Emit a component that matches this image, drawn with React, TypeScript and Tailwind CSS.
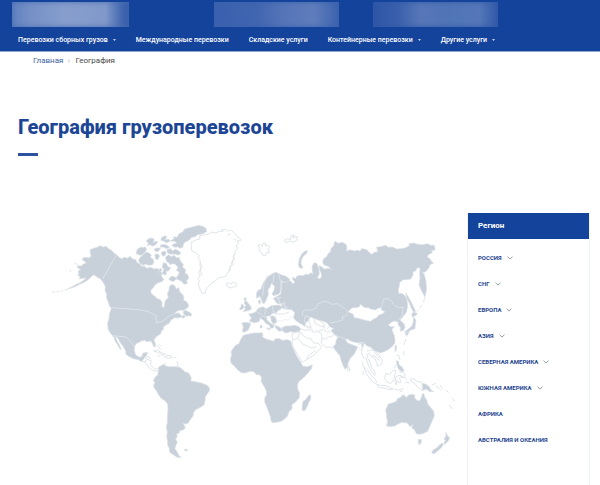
const navItems = [
  { label: 'Перевозки сборных грузов', menu: true },
  { label: 'Международные перевозки', menu: false },
  { label: 'Складские услуги', menu: false },
  { label: 'Контейнерные перевозки', menu: true },
  { label: 'Другие услуги', menu: true },
];

const regions = [
  { label: 'Россия', open: true },
  { label: 'СНГ', open: true },
  { label: 'Европа', open: true },
  { label: 'Азия', open: true },
  { label: 'Северная Америка', open: true },
  { label: 'Южная Америка', open: true },
  { label: 'Африка', open: false },
  { label: 'Австралия и Океания', open: false },
];

// Served regions, filled
const land = [
  // North America
  'M150 104L163 99 172 97 180 92 190 96 198 94 207 102 215 106 222 114 232 121 238 128 246 131 254 126 262 130 270 124 277 131 288 134 290 142 300 147 304 154 314 154 320 160 330 157 345 162 354 160 358 170 366 176 365 186 372 193 366 200 355 203 345 210 340 218 332 226 334 236 344 243 350 250 361 254 366 262 366 275 371 278 374 270 375 258 385 247 382 236 387 226 388 214 396 208 405 213 409 222 416 218 420 232 428 238 432 248 430 255 440 260 447 272 441 280 430 286 418 286 408 290 405 298 414 293 421 298 426 304 416 309 404 308 392 316 388 325 378 330 370 336 371 342 364 349 362 357 350 364 342 374 346 386 346 395 341 396 337 385 333 378 320 380 314 376 303 378 298 382 288 386 284 394 283 406 287 420 300 427 306 424 309 414 323 412 320 421 314 427 311 432 304 440 296 434 280 431 266 424 258 418 257 408 249 394 240 382 234 370 226 364 231 378 238 389 244 404 239 401 233 389 226 380 222 368 218 362 208 350 204 340 203 325 207 310 208 297 214 280 208 272 205 262 199 248 200 238 195 226 196 214 189 202 182 192 174 188 166 182 160 180 151 188 143 196 130 203 119 208 108 214 95 219 84 221 96 215 109 208 120 203 132 195 139 189 128 190 118 192 120 184 113 181 117 175 114 168 122 164 113 158 112 152 124 153 130 147 138 145 134 139 128 136 128 129 137 127 145 129 154 124 151 116Z',
  // Arctic archipelago
  'M288 116L291 105 297 99 304 96 309 98 316 95 320 104 315 111 307 119 298 121 294 118Z',
  'M298 130L308 120 317 112 326 113 334 120 331 127 339 132 342 142 336 150 327 151 317 148 308 151 300 145 296 139Z',
  'M318 78L328 70 338 69 343 75 339 82 348 79 354 81 346 90 337 94 330 89 322 92 325 84Z',
  'M342 103L351 98 362 100 355 109 347 110ZM344 119L353 116 359 123 354 133 347 133ZM364 68L375 62 381 65 375 74 386 72 390 79 380 83 370 78 363 76ZM361 90L374 88 385 93 388 99 378 101 371 96 362 97Z',
  'M364 112L373 108 379 113 374 123 366 122ZM353 172L360 160 367 164 362 170 369 178 360 178Z',
  'M380 105L391 101 399 108 405 102 417 108 423 116 414 120 404 117 393 118 383 114Z',
  'M376 127L385 119 394 125 402 121 410 128 417 127 422 139 430 148 428 157 437 164 435 174 444 180 446 192 440 195 442 206 432 208 425 199 414 194 407 190 415 180 418 172 409 166 414 157 406 148 397 146 390 149 386 143 380 140Z',
  'M370 143L379 145 384 155 392 158 387 167 378 169 380 178 373 180 367 173 372 163 366 157ZM386 192L395 183 405 186 410 192 401 199 393 198Z',
  'M390 78L402 71 400 65 411 67 417 56 428 51 434 42 448 38 460 35 475 31 488 34 498 40 500 50 489 56 473 59 465 65 455 67 447 76 437 80 430 87 429 97 420 100 414 96 404 97 395 91 402 86 410 85 405 79Z',
  'M429 290L437 285 442 289 449 292 455 297 453 304 446 302 440 304 432 299ZM429 301L437 305 429 310 423 307Z',
  // South America
  'M366 450L372 448 377 453 389 455 403 455 414 455 424 460 434 470 446 474 454 488 452 498 467 500 484 504 500 510 508 518 509 526 501 538 496 546 495 558 492 570 479 578 467 584 461 592 459 603 451 614 444 625 435 627 429 624 433 632 436 638 431 644 419 647 417 655 409 657 412 664 407 672 412 682 408 690 405 701 411 710 417 722 424 727 412 727 400 719 389 712 388 700 383 690 382 675 380 665 382 652 379 637 382 622 382 604 384 585 383 567 375 557 363 550 355 538 348 525 342 518 341 509 345 503 340 497 345 487 353 480 355 467 356 457Z',
  'M432 705L438 702 444 705 437 708Z',
  // Africa
  'M610 361L622 358 640 354 658 354 665 352 669 359 667 366 680 373 690 375 700 379 706 371 718 371 728 376 742 374 751 377 755 385 756 393 762 405 767 417 772 426 780 438 785 446 789 454 802 455 817 449 815 460 804 474 790 489 776 500 772 512 774 525 779 533 778 548 767 561 755 570 757 580 747 590 743 602 734 612 724 619 710 622 697 623 693 617 691 604 686 592 681 577 674 561 674 549 680 539 679 527 672 514 666 504 663 499 665 488 659 479 650 480 641 470 630 469 616 474 604 473 592 464 584 454 573 444 571 431 575 421 573 410 580 399 587 391 598 385 601 375Z',
  'M806 541L811 539 813 549 805 566 798 582 792 588 786 584 787 573 789 559 798 553Z',
  // Iberia and France
  'M605 324L618 322 633 325 630 333 625 345 614 352 607 349 610 336Z',
  'M626 298L636 295 647 291 655 279 669 275 678 282 694 272 703 271 717 270 727 276 722 287 711 296 698 294 689 303 678 304 669 307 660 311 657 320 643 323 628 319 634 308Z',
  // Italy, Corsica and Sardinia
  'M659 309L670 304 680 307 681 315 692 325 702 331 700 339 692 340 688 331 677 325 671 316ZM661 330L666 331 666 339 660 339ZM679 339L690 340 688 346Z',
  'M691 304L699 302 708 310 710 322 700 327 694 319ZM704 334L714 333 724 341 726 347 718 349 710 343Z',
  // Great Britain and Ireland
  'M611 250L619 248 618 257 624 264 633 275 634 283 624 287 609 290 616 282 612 276 618 272 612 264 615 257ZM604 267L610 269 611 279 602 285 598 281 603 275Z',
  // Turkey
  'M725 338L738 333 751 333 764 331 777 335 782 341 779 349 763 352 751 350 738 354 727 348Z',
  // Scandinavia
  'M650 250L649 236 653 227 663 222 668 207 676 194 687 183 699 175 708 172 720 178 738 184 750 193 745 202 733 202 725 197 723 210 722 229 716 238 700 242 696 237 702 226 704 214 694 205 691 215 684 225 685 239 681 249 675 263 669 266 665 256 660 244Z',
  'M655 257L661 254 662 263 657 268Z',
  // Russia, Kazakhstan, China and India
  'M700 250L711 244 722 238 724 225 725 202 738 201 747 195 755 201 758 207 765 201 758 194 758 186 767 191 771 183 780 181 789 182 798 177 806 179 812 173 819 177 817 166 816 154 822 143 830 145 834 153 837 163 838 177 832 188 839 191 845 186 843 173 838 162 837 152 846 155 852 162 867 160 874 163 865 154 853 151 848 143 850 132 860 125 864 116 872 109 873 100 881 93 883 82 887 78 893 85 907 82 918 88 921 98 920 109 929 104 944 108 953 105 960 109 964 101 974 102 981 104 986 111 995 118 1005 111 1012 111 1012 103 1009 97 1022 95 1037 91 1045 97 1057 96 1070 102 1082 101 1094 99 1103 95 1109 91 1106 86 1120 84 1133 88 1148 89 1162 86 1173 91 1181 90 1185 98 1184 107 1175 105 1177 113 1165 119 1162 126 1171 132 1174 139 1181 144 1170 149 1167 159 1155 172 1148 171 1153 179 1158 200 1160 222 1155 246 1146 230 1137 210 1140 190 1139 176 1140 160 1132 158 1127 168 1119 171 1119 181 1112 192 1099 194 1089 194 1079 203 1078 214 1075 224 1076 235 1087 236 1096 243 1101 255 1103 274 1099 292 1088 306 1080 315 1092 326 1095 336 1091 346 1081 349 1081 337 1074 329 1074 321 1063 318 1054 322 1045 329 1052 335 1063 335 1056 343 1058 350 1063 362 1065 375 1064 386 1055 396 1046 403 1031 411 1018 413 1003 407 992 397 981 393 973 385 969 397 960 398 954 392 950 403 943 417 931 430 925 442 923 457 915 463 908 449 903 435 899 421 890 411 883 401 880 393 887 388 888 377 894 366 886 361 876 350 873 345 881 341 869 335 861 323 850 319 836 316 821 310 811 306 806 316 797 324 794 334 785 328 776 323 766 316 760 307 762 293 748 287 738 283 726 279 724 267 712 266Z',
  // Novaya Zemlya
  'M775 149L778 131 785 117 795 108 803 107 799 116 791 122 785 132 783 145 789 160 778 158Z',
  // Sakhalin and Japan
  'M1097 234L1105 246 1114 262 1122 278 1127 289 1121 292 1114 280 1109 266 1101 252Z',
  'M1115 298L1120 291 1132 295 1129 301 1117 306ZM1120 306L1128 315 1126 328 1125 341 1112 345 1105 352 1093 351 1104 343 1115 334 1120 321ZM1096 352L1106 350 1105 356 1099 364ZM1065 393L1070 391 1069 405 1065 410Z',
  // Philippines and New Guinea
  'M1069 437L1076 439 1077 449 1086 456 1092 467 1087 472 1078 465 1072 455ZM1147 505L1158 508 1169 516 1171 523 1181 530 1170 530 1159 523 1148 526Z',
  // Australia, Tasmania, New Zealand
  'M1042 574L1044 568 1058 563 1069 559 1072 551 1082 547 1088 539 1096 543 1099 548 1104 541 1115 538 1124 540 1124 549 1132 557 1139 557 1144 548 1147 537 1151 535 1154 546 1160 554 1163 567 1173 578 1181 589 1183 602 1176 619 1170 633 1163 649 1151 655 1139 658 1129 656 1124 645 1115 638 1119 628 1110 635 1102 624 1086 622 1074 627 1064 633 1048 635 1039 632 1043 622 1040 609 1039 596 1037 585Z',
  'M1134 673L1145 674 1143 685 1136 689ZM1217 652L1224 664 1229 668 1225 678 1215 688 1211 685 1216 677 1212 671 1218 663ZM1207 684L1210 690 1202 700 1193 708 1182 717 1175 713 1179 705 1190 699 1199 689Z',
];

// Coastlines of the regions without service, outline only
const outlines = [
  // Greenland
  'M455 92L453 82 467 75 480 72 479 62 491 60 506 57 514 51 528 54 539 48 549 50 545 44 558 43 564 49 572 44 580 52 586 58 591 65 600 70 602 77 591 78 596 85 588 93 593 100 585 108 584 119 579 125 584 133 576 140 580 149 569 155 571 166 562 174 557 184 546 187 536 189 528 196 519 201 511 208 503 217 497 226 496 234 489 236 482 230 479 219 475 210 478 198 473 190 480 181 476 172 482 162 480 151 481 138 475 130 478 122 466 113 457 110 454 102Z',
  'M480 142L487 158 481 164 485 179 478 184M584 117L578 137 573 149M574 149L565 170M588 76L580 72M571 57L562 61',
  // Iceland
  'M558 206L566 203 572 207 581 201 589 205 591 211 581 216 570 219 562 214Z',
  // Svalbard and Franz Josef Land
  'M654 91L661 88 667 94 669 85 677 84 675 92 685 91 690 97 684 104 688 114 680 112 675 123 668 120 664 111 656 106 660 100Z',
  'M732 76L743 71 751 75 753 63 763 59 758 69 771 64 771 75 759 82 748 78 738 83Z',
  // Central America and the Caribbean
  'M304 440L315 440 323 433 333 437 331 448 338 457 348 463 356 459M315 440L323 454 334 463 345 469 356 466M323 433L316 430 322 424 333 432M341 408L352 405 362 412 376 418 367 420 356 413ZM374 425L384 421 397 424 394 429 380 429ZM352 423L361 424M403 427L409 428M411 438L414 451 412 459M350 392L357 395 361 405M358 388L363 393M372 448L378 445',
  // Baltics, Belarus, Ukraine and the Balkans
  'M706 247L717 251 718 264 730 270 742 278 738 284M700 328L709 331 714 337M711 297L733 297 747 291',
  // Middle East
  'M760 354L770 353 781 350 789 361 799 369 812 371 821 384 836 385 845 397 834 409 820 421 800 434 788 442 780 431 770 414 761 399 756 387 759 374 755 363Z',
  'M782 341L795 346 810 344 820 352 833 349 844 356 846 370 844 384 857 397 870 396 880 398M800 334L813 337 818 347M833 349L851 344 862 352 872 347M844 370L858 373 866 365 875 366 883 357M760 374L773 370 781 350M773 370L789 388 805 394 813 400 830 395M800 434L805 421 826 407M793 313L797 302 807 306 807 321 813 335 805 340 798 333Z',
  'M841 318L853 328 850 340M820 310L827 326 840 333 856 335M868 335L861 341',
  // Sri Lanka
  'M923 453L928 457 929 467 924 468Z',
  // South-East Asia
  'M971 387L966 400 964 415 971 428 978 431 984 446 989 459 998 475 1005 481 1004 469 994 456 991 443 984 431 980 419 987 414 993 425 1004 429 1010 443 1012 453 1024 448 1027 436 1018 421 1009 412M981 409L991 405 1001 407 1010 420 1019 430M993 425L1002 420 1012 432 1020 436',
  'M971 455L982 465 993 481 1006 493 1010 502 1004 506 990 492 978 474ZM1010 508L1025 512 1037 511 1050 519 1060 522 1048 524 1032 519 1017 518ZM1037 475L1049 479 1059 466 1068 467 1064 480 1062 493 1053 505 1041 502 1034 491ZM1068 485L1077 481 1089 485 1078 490 1083 501 1077 504 1071 496 1069 510 1065 501ZM1094 485L1099 493M1096 502L1108 503M1112 492L1122 491 1129 499 1146 502 1147 527 1132 515 1122 504 1113 499ZM1063 522L1075 525 1091 521M1078 531L1088 528M1069 423L1076 420 1080 435M1078 472L1089 470 1096 480 1089 489 1080 480M1061 460L1070 446M1092 421L1091 408M968 441L969 455M969 468L969 480M1175 510L1189 505M1187 513L1203 524M1200 510L1208 521M1218 525L1225 532M1237 549L1243 559M1227 570L1238 582',
  // Aleutian and Kuril chains
  'M36 231L45 231M50 230L59 230M63 229L70 226M74 225L84 222M88 166L94 169M104 144L112 149M1155 247L1150 262M1147 270L1139 280M1131 289L1135 286M1098 372L1092 389',
];

// Unserved countries enclosed by filled land
const cutouts = [
  // Mongolia
  'M925 290L931 283 939 278 950 278 959 275 960 268 968 273 973 278 985 278 993 283 1006 285 1015 280 1023 278 1025 286 1035 290 1026 297 1017 299 1011 307 997 314 992 319 978 316 966 313 953 309 943 308 940 298Z',
  // Ukraine and Romania
  'M711 290L724 281 740 283 756 285 763 292 762 304 750 309 744 316 735 312 729 318 713 318 706 306Z',
  // Nepal, Bhutan and Bangladesh
  'M916 372L924 373 936 380 955 384 966 382 964 391 969 402 962 404 954 395 940 390 922 383Z',
];

// Borders drawn over the filled land
const borders = [
  'M228 121L188 192M214 278L260 281 305 285 327 291 348 302 349 324 369 318 386 304 404 296',
  'M218 362L258 366 270 378 284 395',
  'M702 177L699 205M716 177L722 200 725 225M684 180L672 205 668 244',
  'M677 277L674 300M697 272L699 289 710 293M650 290L668 301M655 279L664 288',
  'M724 267L733 262 736 282M710 250L724 247',
  'M788 302L788 291 795 284 812 286 830 279 832 268 850 259 864 261 876 268 893 266 909 277 925 291 917 303 908 305 907 316 890 320 870 324',
  'M1023 278L1027 268 1030 253 1042 250 1055 258 1063 271 1078 278 1089 276 1087 301 1074 316',
  'M886 361L900 366 918 373M955 388L974 382',
];

function WorldMap() {
  return (
    <svg viewBox="-66 0 1347 750" className="block w-full" role="img" aria-label="Карта мира">
      <g fill="#c8d0da" stroke="#dce2e9" strokeWidth="2" strokeLinejoin="round">
        {land.map((d) => (
          <path key={d} d={d} />
        ))}
      </g>
      <g className="fill-white stroke-[#e3e8ee] stroke-2" strokeLinejoin="round">
        {cutouts.map((d) => (
          <path key={d} d={d} />
        ))}
      </g>
      <g fill="none" stroke="#e0e5eb" strokeWidth="3" strokeLinejoin="round">
        {outlines.map((d) => (
          <path key={d} d={d} />
        ))}
      </g>
      <g fill="none" stroke="#dde3ea" strokeWidth="3">
        {borders.map((d) => (
          <path key={d} d={d} />
        ))}
      </g>
    </svg>
  );
}

function Chevron() {
  return (
    <svg viewBox="0 0 6 4" className="mt-0.5 h-1 w-1.5" fill="none" stroke="#79818c" strokeWidth="0.8">
      <path d="M0.5 0.7L3 3.1 5.5 0.7" />
    </svg>
  );
}

export default function App() {
  return (
    <div className="flex min-h-screen flex-col bg-white font-['Roboto','Liberation_Sans',sans-serif]">
      <header className="border-b border-[#8fa5cf] bg-[#14439c] pt-0.5">
        <div className="flex pl-3">
          <div className="h-[25px] w-[117px] bg-[linear-gradient(90deg,#5f80bf_0%,#7590c6_15%,#879ecd_45%,#8199ca_80%,#4a6db3_92%,#3159a8_100%)] shadow-[inset_0_0_5px_#4a6db3]" />
          <div className="ml-[85px] h-[25px] w-[125px] bg-[linear-gradient(90deg,#3a60ae_0%,#4166b0_35%,#5574b8_55%,#5f7dbb_80%,#3c62ae_100%)] shadow-[inset_0_0_5px_#3c62ae]" />
          <div className="ml-[34px] h-[25px] w-[125px] bg-[linear-gradient(90deg,#2c55a6_0%,#3a60ac_20%,#5776b8_38%,#5074b6_60%,#5577b9_85%,#3159a8_100%)] shadow-[inset_0_0_5px_#3159a8]" />
        </div>
        <nav className="flex h-6 items-center gap-5 pt-0.5 pl-[18px] text-[7px] font-medium text-white">
          {navItems.map((item) =>
            item.menu ? (
              <button key={item.label} type="button" className="flex items-center gap-[5px] whitespace-nowrap">
                {item.label}
                <svg viewBox="0 0 4 2" className="h-0.5 w-[3px]" fill="currentColor">
                  <path d="M0 0H4L2 2Z" />
                </svg>
              </button>
            ) : (
              <a key={item.label} href="#" className="whitespace-nowrap">
                {item.label}
              </a>
            ),
          )}
        </nav>
      </header>

      <nav className="flex items-center gap-1 pt-[3px] pl-[33px] text-[8px] leading-3" aria-label="Навигация">
        <a href="#" className="text-[#3f5f9f]">
          Главная
        </a>
        <svg viewBox="0 0 4 4" className="h-1 w-1" fill="none" stroke="#b9bec6" strokeWidth="0.8">
          <path d="M1 0.3L2.7 2 1 3.7" />
        </svg>
        <span className="text-[#4a4a4a]">География</span>
      </nav>

      <div className="mt-[46px] pl-[18px]">
        <h1 className="text-[20px] leading-7 font-extrabold text-[#1c4695]">География грузоперевозок</h1>
        <div className="mt-3 h-[3px] w-5 bg-[#2b539e]" />
      </div>

      <main className="mt-[57px] flex flex-1 pr-[10px] pl-[18px]">
        <div className="min-w-0 flex-1 pt-0.5">
          <WorldMap />
        </div>
        <aside className="w-[123px] shrink-0 border-x border-[#f1f3f6]">
          <h2 className="bg-[#14439c] px-[10px] text-[8px] leading-[26px] font-bold text-white">Регион</h2>
          <ul className="pt-[5px] pl-[10px]">
            {regions.map((region) => (
              <li key={region.label} className="flex h-[26px] items-center">
                <button
                  type="button"
                  className="flex items-center gap-[5px] text-[6px] font-bold whitespace-nowrap text-[#1f4590] uppercase"
                >
                  {region.label}
                  {region.open && <Chevron />}
                </button>
              </li>
            ))}
          </ul>
        </aside>
      </main>
    </div>
  );
}
